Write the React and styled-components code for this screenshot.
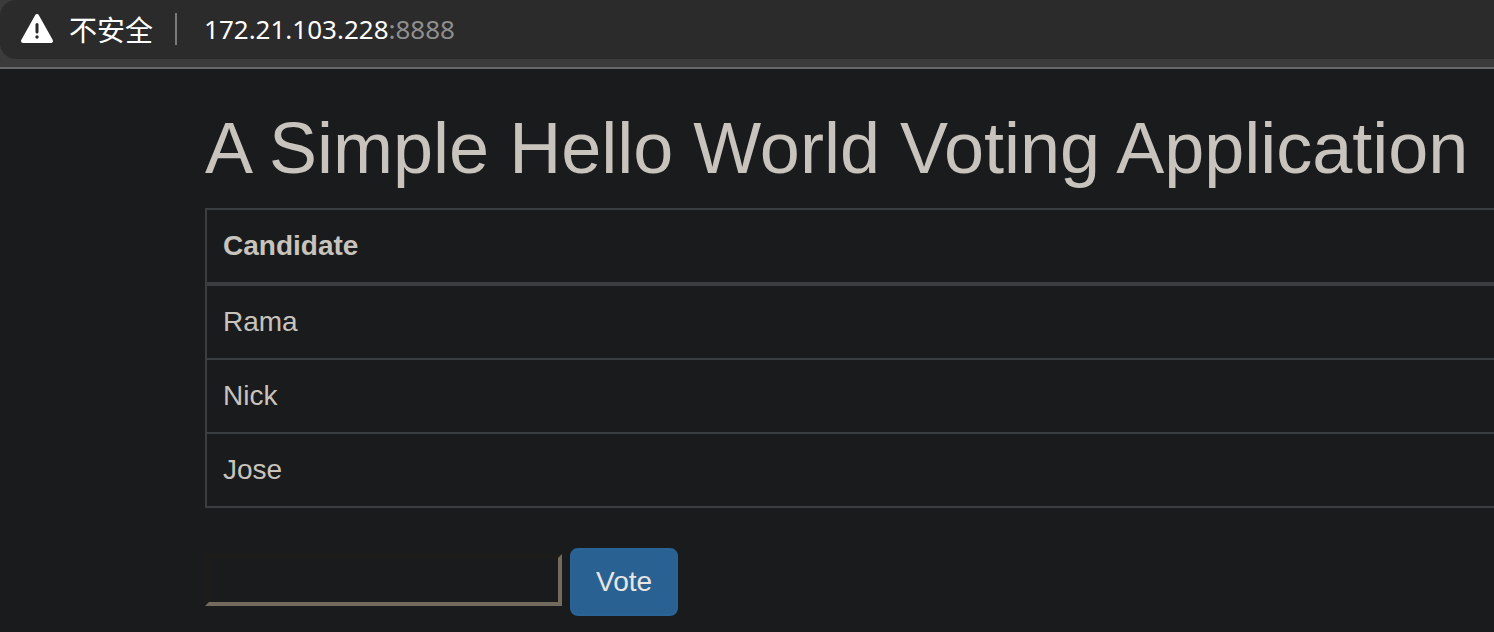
import React from "react";
import styled, { createGlobalStyle } from "styled-components";

const Global = createGlobalStyle`
  * { box-sizing: border-box; }
  body { margin: 0; background: #191b1c; color: #c8c3bc; font: 28px/40px "Liberation Sans", Arial, sans-serif; }
`;
const Chrome = styled.header`
  background: #3b3b3b;
  border-bottom: 2px solid #686868;
  padding-bottom: 8px;
`;
const AddressBar = styled.div`
  display: flex;
  align-items: center;
  height: 59px;
  padding: 0 0 2px 20px;
  background: #2b2b2b;
  border-radius: 16px 0 0 16px;
  color: #fff;
  font-family: "Noto Sans", "Noto Sans CJK SC", sans-serif;
  font-size: 26px;
`;
const Warning = styled.svg`
  width: 34px;
  height: 32px;
`;
const Security = styled.span`
  margin-left: 15px;
  font-family: "Noto Sans CJK SC", sans-serif;
  font-size: 28px;
`;
const Divider = styled.span`
  width: 2px;
  height: 32px;
  margin: 0 27px 0 22px;
  background: #7a7a7a;
`;
const Port = styled.span`
  color: #8f8f8f;
`;
const Main = styled.main`
  padding: 40px 0 16px 205px;
`;
const Title = styled.h1`
  margin: 0 0 20px;
  font-size: 72px;
  line-height: 79px;
  font-weight: 400;
  white-space: nowrap;
`;
const Candidates = styled.table`
  width: 100%;
  border-collapse: separate;
  border-spacing: 0;
  border: solid #3b3e40;
  border-width: 2px 0 0 2px;
`;
const HeadCell = styled.th`
  padding: 16px;
  border-bottom: 4px solid #3b3e40;
  text-align: left;
`;
const Cell = styled.td`
  padding: 16px;
  border-bottom: 2px solid #3b3e40;
`;
const Form = styled.form`
  display: flex;
  align-items: center;
  gap: 8px;
  margin-top: 40px;
`;
const VoteInput = styled.input`
  width: 357px;
  height: 52px;
  margin: 0 0 4px;
  border: 4px solid;
  border-color: #1e1c18 #736b5e #736b5e #1e1c18;
  background: #191b1c;
  color: inherit;
  font: inherit;
`;
const VoteButton = styled.button`
  height: 68px;
  padding: 0 24px;
  border: 2px solid #2a6496;
  border-radius: 8px;
  background: #2a6193;
  color: #e8e6e3;
  font: inherit;
`;

export default function App() {
  return (
    <>
      <Global />
      <Chrome>
        <AddressBar>
          <Warning viewBox="0 0 34 32" aria-hidden="true">
            <path d="M17 3 31 28H3Z" fill="#fff" stroke="#fff" strokeWidth="4" strokeLinejoin="round" />
            <path d="M17 11.5v7.5" stroke="#2b2b2b" strokeWidth="3" strokeLinecap="round" />
            <circle cx="17" cy="24" r="1.7" fill="#2b2b2b" />
          </Warning>
          <Security>不安全</Security>
          <Divider />
          <span>172.21.103.228<Port>:8888</Port></span>
        </AddressBar>
      </Chrome>
      <Main>
        <Title>A Simple Hello World Voting Application</Title>
        <Candidates>
          <thead>
            <tr><HeadCell scope="col">Candidate</HeadCell></tr>
          </thead>
          <tbody>
            {["Rama", "Nick", "Jose"].map((name) => (
              <tr key={name}><Cell>{name}</Cell></tr>
            ))}
          </tbody>
        </Candidates>
        <Form onSubmit={(e) => e.preventDefault()}>
          <VoteInput type="text" aria-label="Candidate" />
          <VoteButton type="submit">Vote</VoteButton>
        </Form>
      </Main>
    </>
  );
}
